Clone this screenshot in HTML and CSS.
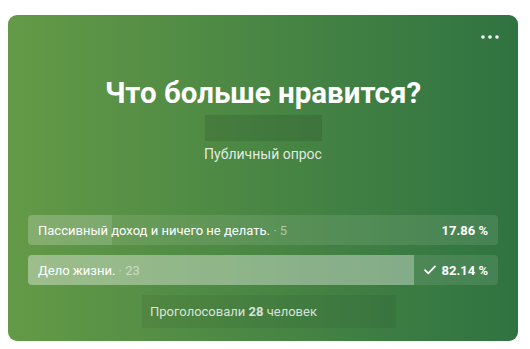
FILE: index.html
```html
<!DOCTYPE html>
<html lang="ru">
<head>
    <meta charset="UTF-8">
    <meta name="viewport" content="width=device-width, initial-scale=1.0">
    <title>Опрос</title>
    <link rel="stylesheet" href="styles.css">
</head>
<body>
    <!-- Карточка опроса -->
    <div class="poll">
        <button class="poll-menu" aria-label="Меню">
            <svg width="18" height="4" viewBox="0 0 18 4">
                <circle cx="2" cy="2" r="1.8" fill="#fff"/>
                <circle cx="9" cy="2" r="1.8" fill="#fff"/>
                <circle cx="16" cy="2" r="1.8" fill="#fff"/>
            </svg>
        </button>

        <h1 class="poll-title">Что больше нравится?</h1>
        <div class="poll-author"></div>
        <div class="poll-type">Публичный опрос</div>

        <div class="poll-answers">
            <div class="answer">
                <div class="answer-fill" style="width: 17.86%"></div>
                <span class="answer-text">Пассивный доход и ничего не делать. <span class="answer-count">· 5</span></span>
                <span class="answer-percent">17.86 %</span>
            </div>
            <div class="answer answer-voted">
                <div class="answer-fill" style="width: 82.14%"></div>
                <span class="answer-text">Дело жизни. <span class="answer-count">· 23</span></span>
                <span class="answer-percent">
                    <svg class="check" width="12" height="10" viewBox="0 0 12 10">
                        <path d="M1 5.2 L4.3 8.4 L11 1.4" fill="none" stroke="#fff" stroke-width="1.7" stroke-linecap="round" stroke-linejoin="round"/>
                    </svg>
                    82.14 %
                </span>
            </div>
        </div>

        <div class="poll-footer">Проголосовали <b>28</b> человек</div>
    </div>
</body>
</html>
```

FILE: styles.css
```css
body {
    margin: 0;
    padding: 0;
    background: #fff;
    font-family: Roboto, 'Liberation Sans', sans-serif;
}

/* Карточка */
.poll {
    position: relative;
    box-sizing: border-box;
    width: 510px;
    height: 326px;
    margin: 15px 0 0 8px;
    padding: 62px 20px 0;
    border-radius: 9px;
    background: linear-gradient(90deg, #649a47, #2f7341);
    color: #fff;
    text-align: center;
}

.poll-menu {
    position: absolute;
    top: 20px;
    right: 19px;
    padding: 0;
    border: none;
    background: none;
    line-height: 0;
    cursor: pointer;
}

.poll-title {
    margin: 0;
    font-size: 29.5px;
    line-height: 32px;
    font-weight: 700;
}

.poll-author {
    width: 117px;
    height: 26px;
    margin: 6px auto 0;
    background: rgba(0, 0, 0, 0.1);
}

.poll-type {
    margin-top: 4px;
    font-size: 14px;
    line-height: 18px;
    color: rgba(255, 255, 255, 0.85);
}

/* Ответы */
.poll-answers {
    display: flex;
    flex-direction: column;
    gap: 10px;
    margin-top: 52px;
}

.answer {
    position: relative;
    display: flex;
    align-items: center;
    justify-content: space-between;
    height: 30px;
    padding: 0 10px;
    border-radius: 4px;
    background: rgba(255, 255, 255, 0.1);
    overflow: hidden;
    font-size: 13px;
}

.answer-fill {
    position: absolute;
    top: 0;
    bottom: 0;
    left: 0;
    background: rgba(255, 255, 255, 0.13);
}

.answer-voted .answer-fill {
    background: rgba(255, 255, 255, 0.3);
}

.answer-text,
.answer-percent {
    position: relative;
}

.answer-count {
    color: rgba(255, 255, 255, 0.5);
}

.answer-percent {
    display: flex;
    align-items: center;
    gap: 6px;
    font-weight: 700;
}

/* Итог */
.poll-footer {
    box-sizing: border-box;
    width: 254px;
    height: 33px;
    margin: 10px 0 0 114px;
    padding-left: 8px;
    background: rgba(0, 0, 0, 0.06);
    font-size: 13px;
    line-height: 33px;
    text-align: left;
    color: rgba(255, 255, 255, 0.8);
}
```
